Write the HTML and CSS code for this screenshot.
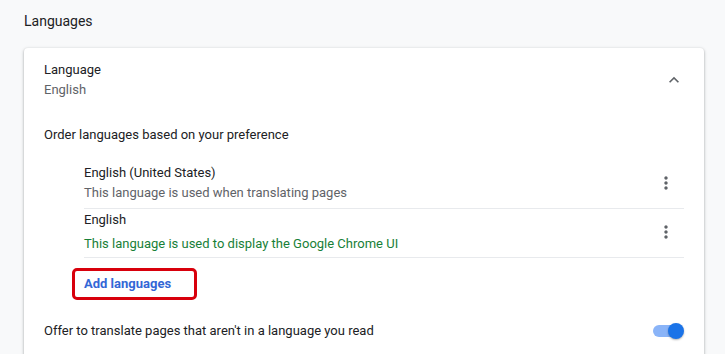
FILE: index.html
```html
<!DOCTYPE html>
<html>
<head>
<meta charset="utf-8">
<link rel="stylesheet" href="styles.css">
</head>
<body>
<div class="page">
  <h2 class="section-title">Languages</h2>
  <div class="card">
    <div class="expand-row">
      <div class="two-line">
        <div class="primary">Language</div>
        <div class="secondary">English</div>
      </div>
      <span class="icon-btn">
        <svg width="20" height="20" viewBox="0 0 24 24"><path d="M12 8l-6 6 1.41 1.41L12 10.83l4.59 4.58L18 14z" fill="#5f6368"/></svg>
      </span>
    </div>
    <div class="order-label">Order languages based on your preference</div>
    <div class="lang-list">
      <div class="lang-row first">
        <div class="two-line">
          <div class="primary">English (United States)</div>
          <div class="secondary">This language is used when translating pages</div>
        </div>
        <span class="kebab">
          <svg width="20" height="20" viewBox="0 0 24 24"><path d="M12 8c1.1 0 2-.9 2-2s-.9-2-2-2-2 .9-2 2 .9 2 2 2zm0 2c-1.1 0-2 .9-2 2s.9 2 2 2 2-.9 2-2-.9-2-2-2zm0 6c-1.1 0-2 .9-2 2s.9 2 2 2 2-.9 2-2-.9-2-2-2z" fill="#5f6368"/></svg>
        </span>
      </div>
      <div class="lang-row second">
        <div class="two-line">
          <div class="primary">English</div>
          <div class="secondary green">This language is used to display the Google Chrome UI</div>
        </div>
        <span class="kebab">
          <svg width="20" height="20" viewBox="0 0 24 24"><path d="M12 8c1.1 0 2-.9 2-2s-.9-2-2-2-2 .9-2 2 .9 2 2 2zm0 2c-1.1 0-2 .9-2 2s.9 2 2 2 2-.9 2-2-.9-2-2-2zm0 6c-1.1 0-2 .9-2 2s.9 2 2 2 2-.9 2-2-.9-2-2-2z" fill="#5f6368"/></svg>
        </span>
      </div>
      <div class="add-box"><a class="add-link">Add languages</a></div>
    </div>
    <div class="toggle-row">
      <span class="primary">Offer to translate pages that aren't in a language you read</span>
      <span class="toggle"><span class="track"></span><span class="knob"></span></span>
    </div>
  </div>
</div>
</body>
</html>
```

FILE: styles.css
```css
html, body {
  margin: 0;
  padding: 0;
  background: #f8f9fa;
  height: 100%;
  overflow: hidden;
}
body {
  font-family: Roboto, "Liberation Sans", Arial, sans-serif;
  font-size: 13px;
  line-height: 20px;
  color: #202124;
}
.page {
  padding: 11px 21px 0 24px;
}
.section-title {
  margin: 0 0 17px 0;
  font-size: 14px;
  font-weight: 400;
  line-height: 20px;
  color: #202124;
}
.card {
  background: #fff;
  border-radius: 4px;
  box-shadow: 0 1px 2px rgba(60,64,67,0.3), 0 1px 3px 1px rgba(60,64,67,0.15);
  padding: 12px 20px 20px 20px;
  height: 400px;
}
.expand-row {
  display: flex;
  align-items: center;
  justify-content: space-between;
}
.two-line {
  display: flex;
  flex-direction: column;
}
.primary {
  color: #202124;
}
.secondary {
  color: #5f6368;
}
.green {
  color: #188038;
}
.icon-btn {
  width: 20px;
  height: 20px;
  display: flex;
}
.order-label {
  margin-top: 25px;
}
.lang-list {
  margin: 14px 0 0 40px;
}
.lang-row {
  display: flex;
  align-items: center;
  justify-content: space-between;
  border-bottom: 1px solid #e8eaed;
}
.lang-row.first {
  padding: 4px 0 5px 0;
}
.lang-row.second {
  padding: 1px 0 3px 0;
}
.lang-row.second .secondary {
  margin-top: 4px;
}
.kebab {
  width: 20px;
  height: 20px;
  display: flex;
  margin-right: 8px;
}
.add-box {
  margin: 10px 0 0 -12px;
  width: 125px;
  height: 32px;
  box-sizing: border-box;
  border: 3px solid #d8000c;
  border-radius: 5px;
  padding: 3px 0 0 9px;
}
.add-link {
  color: #3367d6;
  font-weight: 700;
  line-height: 20px;
  display: block;
}
.toggle-row {
  display: flex;
  align-items: center;
  justify-content: space-between;
  margin-top: 21px;
}
.toggle {
  position: relative;
  width: 32px;
  height: 16px;
}
.track {
  position: absolute;
  left: 1px;
  top: 2px;
  width: 28px;
  height: 12px;
  border-radius: 6px;
  background: #8ab4f8;
}
.knob {
  position: absolute;
  right: 0;
  top: 0;
  width: 16px;
  height: 16px;
  border-radius: 50%;
  background: #1a73e8;
  box-shadow: 0 1px 2px rgba(0,0,0,0.3);
}
```
